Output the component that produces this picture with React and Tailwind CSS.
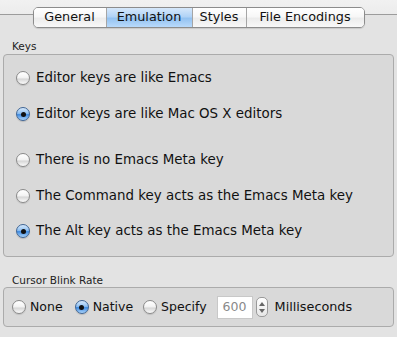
import React from 'react';

const font = { fontFamily: '"DejaVu Sans", "Liberation Sans", sans-serif' };

// Aqua-style radio button
const Radio = ({ checked }) =>
  checked ? (
    <span className="relative flex h-[14px] w-[14px] shrink-0 items-center justify-center rounded-full border border-[#3f6594] bg-[linear-gradient(to_bottom,#d8eafc_0%,#8ebff1_45%,#3f8ae0_55%,#a9d3fb_100%)] shadow-[0_1px_1px_rgba(0,0,0,0.15)]">
      <span className="h-[5px] w-[5px] rounded-full bg-[#111]" />
    </span>
  ) : (
    <span className="h-[14px] w-[14px] shrink-0 rounded-full border border-[#8a8a8a] bg-[linear-gradient(to_bottom,#ffffff_0%,#f4f4f4_45%,#d8d8d8_60%,#fbfbfb_100%)] shadow-[0_1px_1px_rgba(0,0,0,0.12)]" />
  );

const Option = ({ checked, label, className = '', text = 'text-[13.4px] gap-[6px]' }) => (
  <div className={`flex h-[20px] items-center ${text} ${className}`}>
    <Radio checked={checked} />
    <span className="leading-none text-[#111]">{label}</span>
  </div>
);

const tabs = ['General', 'Emulation', 'Styles', 'File Encodings'];

const App = () => {
  return (
    <div className="h-[346px] w-[397px] bg-white" style={font}>
      <div className="h-[337px] bg-[#e3e3e3]">
        {/* Tab strip */}
        <div className="flex h-[28px] items-start bg-[linear-gradient(to_bottom,#f1f1f1_0px,#ececec_14px,#e3e3e3_14px)]">
          <div className="h-[15px] flex-1 border-b border-[#9c9c9c]" />
          <div className="mt-[7px] flex h-[21px] overflow-hidden rounded-[5px] border border-[#8c8c8c] shadow-[0_1px_1px_rgba(0,0,0,0.12)]">
            {tabs.map((t, i) => (
              <div
                key={t}
                className={`flex items-center justify-center text-[12.8px] leading-none text-[#111] ${
                  i > 0 ? 'border-l border-[#a5a5a5]' : ''
                } ${
                  t === 'Emulation'
                    ? 'w-[86px] bg-[linear-gradient(to_bottom,#d6e8fb_0%,#b1d3f6_45%,#93c2f1_55%,#b9dafb_100%)]'
                    : 'bg-[linear-gradient(to_bottom,#ffffff_0%,#f7f7f7_45%,#ececec_55%,#f8f8f8_100%)]'
                } ${t === 'General' ? 'w-[72px]' : ''} ${t === 'Styles' ? 'w-[54px]' : ''} ${
                  t === 'File Encodings' ? 'w-[118px]' : ''
                }`}
              >
                {t}
              </div>
            ))}
          </div>
          <div className="h-[15px] flex-1 border-b border-[#9c9c9c]" />
        </div>

        {/* Keys */}
        <div className="ml-[12px] mt-[12px] text-[10.5px] leading-[13px] text-[#222]">Keys</div>
        <div className="mx-[3px] mt-[1px] h-[203px] rounded-[4px] border border-[#ababab] bg-[#d9d9d9] pl-[12px] pt-[13px]">
          <Option label="Editor keys are like Emacs" />
          <Option checked label="Editor keys are like Mac OS X editors" className="mt-[16px]" />
          <Option label="There is no Emacs Meta key" className="mt-[26px]" />
          <Option label="The Command key acts as the Emacs Meta key" className="mt-[16px]" />
          <Option checked label="The Alt key acts as the Emacs Meta key" className="mt-[15px]" />
        </div>

        {/* Cursor Blink Rate */}
        <div className="ml-[12px] mt-[17px] text-[10.5px] leading-[13px] text-[#222]">Cursor Blink Rate</div>
        <div className="mx-[3px] flex h-[40px] items-center rounded-[4px] border border-[#ababab] bg-[#d9d9d9] pl-[8px]">
          <Option text="text-[12.5px] gap-[4px]" label="None" />
          <Option text="text-[12.5px] gap-[4px]" checked label="Native" className="ml-[12px]" />
          <Option text="text-[12.5px] gap-[4px]" label="Specify" className="ml-[10px]" />
          <div className="ml-[10px] flex h-[23px] w-[36px] items-center border border-[#c8c8c8] bg-white pl-[5px] text-[12.5px] text-[#8a8a8a]">
            600
          </div>
          <div className="ml-[3px] flex h-[20px] w-[12px] flex-col items-center justify-center gap-[3px] rounded-[5px] border border-[#9a9a9a] bg-[linear-gradient(to_bottom,#ffffff,#e6e6e6)]">
            <svg width="6" height="4" viewBox="0 0 6 4">
              <path d="M3 0 L6 4 L0 4 Z" fill="#666" />
            </svg>
            <svg width="6" height="4" viewBox="0 0 6 4">
              <path d="M0 0 L6 0 L3 4 Z" fill="#666" />
            </svg>
          </div>
          <span className="ml-[7px] text-[12.8px] leading-none text-[#111]">Milliseconds</span>
        </div>
      </div>
    </div>
  );
};

export default App;
